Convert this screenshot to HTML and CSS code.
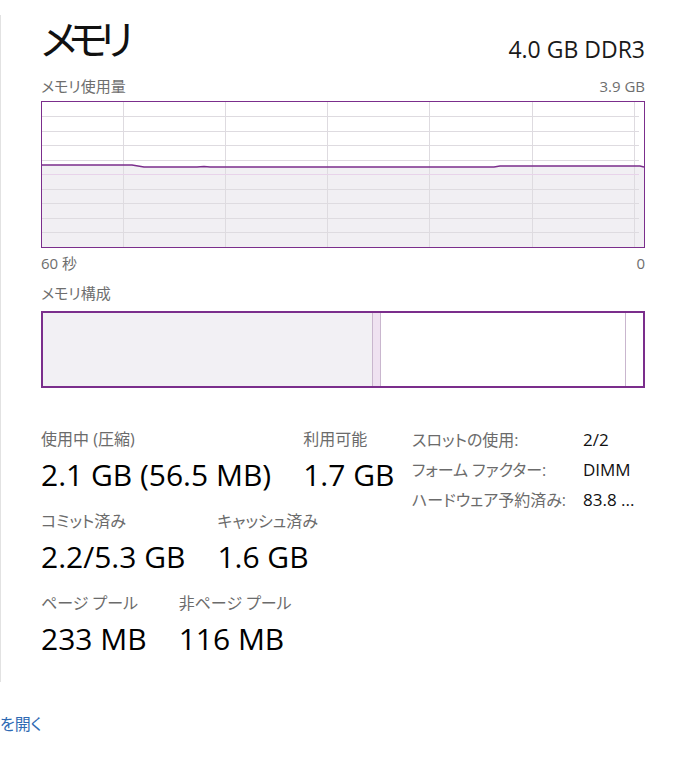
FILE: index.html
```html
<!DOCTYPE html>
<html lang="ja">
<head>
<meta charset="utf-8">
<title>メモリ</title>
<link rel="stylesheet" href="styles.css">
</head>
<body>
<div class="page">
  <div class="panel">
    <div class="header">
      <div class="title">メモリ</div>
      <div class="spec">4.0 GB DDR3</div>
    </div>
    <div class="caption-row top-caption">
      <span>メモリ使用量</span>
      <span>3.9 GB</span>
    </div>
    <div class="graph">
      <svg width="602" height="145" viewBox="0 0 602 145">
        <polygon points="0,63 90,63 102,65 155,65 162,64.5 168,65 452,65 458,64 598,64 602,65 602,145 0,145" fill="#f1eff3"/>
        <g stroke="#dedbe0" stroke-width="1">
          <line x1="0" y1="14.5" x2="597" y2="14.5"/>
          <line x1="0" y1="29.5" x2="597" y2="29.5"/>
          <line x1="0" y1="43.5" x2="597" y2="43.5"/>
          <line x1="0" y1="58.5" x2="597" y2="58.5"/>
          <line x1="0" y1="87.5" x2="597" y2="87.5"/>
          <line x1="0" y1="101.5" x2="597" y2="101.5"/>
          <line x1="0" y1="116.5" x2="597" y2="116.5"/>
          <line x1="0" y1="130.5" x2="597" y2="130.5"/>
          <line x1="81.5" y1="0" x2="81.5" y2="145"/>
          <line x1="183.5" y1="0" x2="183.5" y2="145"/>
          <line x1="285.5" y1="0" x2="285.5" y2="145"/>
          <line x1="387.5" y1="0" x2="387.5" y2="145"/>
          <line x1="490.5" y1="0" x2="490.5" y2="145"/>
          <line x1="592.5" y1="0" x2="592.5" y2="145"/>
        </g>
        <line x1="0" y1="72.5" x2="597" y2="72.5" stroke="#e8d3ea" stroke-width="1"/>
        <polyline points="0,63 90,63 102,65 155,65 162,64.5 168,65 452,65 458,64 598,64 602,65" fill="none" stroke="#7b2e8c" stroke-width="1.4"/>
      </svg>
    </div>
    <div class="caption-row time-caption">
      <span>60 秒</span>
      <span>0</span>
    </div>
    <div class="caption-row comp-caption">
      <span>メモリ構成</span>
    </div>
    <div class="composition">
      <div class="seg seg-inuse"></div>
      <div class="seg seg-modified"></div>
      <div class="seg seg-standby"></div>
      <div class="seg seg-free"></div>
    </div>
    <div class="stats">
      <div class="stats-main">
        <div class="stat-row">
          <div class="stat">
            <div class="stat-label">使用中 (圧縮)</div>
            <div class="stat-value">2.1 GB (56.5 MB)</div>
          </div>
          <div class="stat">
            <div class="stat-label">利用可能</div>
            <div class="stat-value">1.7 GB</div>
          </div>
        </div>
        <div class="stat-row">
          <div class="stat">
            <div class="stat-label">コミット済み</div>
            <div class="stat-value">2.2/5.3 GB</div>
          </div>
          <div class="stat">
            <div class="stat-label">キャッシュ済み</div>
            <div class="stat-value">1.6 GB</div>
          </div>
        </div>
        <div class="stat-row">
          <div class="stat">
            <div class="stat-label">ページ プール</div>
            <div class="stat-value">233 MB</div>
          </div>
          <div class="stat">
            <div class="stat-label">非ページ プール</div>
            <div class="stat-value">116 MB</div>
          </div>
        </div>
      </div>
      <div class="stats-side">
        <div class="side-label">スロットの使用:</div>
        <div class="side-value">2/2</div>
        <div class="side-label">フォーム ファクター:</div>
        <div class="side-value">DIMM</div>
        <div class="side-label">ハードウェア予約済み:</div>
        <div class="side-value">83.8 ...</div>
      </div>
    </div>
  </div>
  <div class="footer">
    <a class="link" href="#">を開く</a>
  </div>
</div>
</body>
</html>
```

FILE: styles.css
```css
html, body {
  margin: 0;
  padding: 0;
  background: #ffffff;
}

body {
  font-family: "Open Sans", "Noto Sans CJK JP", sans-serif;
  font-feature-settings: "palt" 1;
  color: #000000;
  width: 677px;
  height: 760px;
  overflow: hidden;
}

.page {
  display: flex;
  flex-direction: column;
}

.panel {
  margin-top: 15px;
  height: 667px;
  box-sizing: border-box;
  border-left: 1px solid #e2e2e2;
  padding: 0 32px 0 40px;
  display: flex;
  flex-direction: column;
}

.header {
  height: 62px;
  display: flex;
  justify-content: space-between;
  align-items: flex-end;
}

.title {
  font-size: 41px;
  line-height: 50px;
  letter-spacing: -8px;
  color: #111111;
  margin-bottom: 13px;
}

.spec {
  font-size: 23px;
  line-height: 30px;
  color: #1a1a1a;
  margin-bottom: 13px;
}

.caption-row {
  display: flex;
  justify-content: space-between;
  font-size: 15px;
  line-height: 18px;
  color: #6e6e6e;
}

.top-caption {
  height: 24px;
}

.graph {
  width: 602px;
  height: 145px;
  border: 1px solid #7b2e8c;
}

.graph svg {
  display: block;
}

.time-caption {
  height: 32px;
  box-sizing: border-box;
  padding-top: 6px;
}

.comp-caption {
  height: 31px;
  box-sizing: border-box;
  padding-top: 4px;
}

.composition {
  width: 600px;
  height: 73px;
  border: 2px solid #7b2e8c;
  display: flex;
}

.seg {
  height: 100%;
  box-sizing: border-box;
}

.seg-inuse {
  width: 329px;
  background: #f2f0f4;
}

.seg-modified {
  width: 9px;
  background: #efe2f1;
  border-left: 1px solid #c9b6ce;
  border-right: 1px solid #c9b6ce;
}

.seg-standby {
  flex: 1;
  border-right: 1px solid #c9b6ce;
}

.seg-free {
  width: 17px;
}

.stats {
  margin-top: 41px;
  display: flex;
}

.stats-main {
  width: 371px;
  display: flex;
  flex-direction: column;
}

.stat-row {
  display: flex;
  gap: 32px;
  height: 82px;
}

.stat-label {
  font-size: 16px;
  line-height: 20px;
  color: #6b6b6b;
}

.stat-value {
  margin-top: 8px;
  font-size: 30px;
  line-height: 36px;
  color: #000000;
}

.stats-side {
  display: grid;
  grid-template-columns: 171px auto;
  grid-auto-rows: 30px;
  align-content: start;
  margin-top: 1px;
}

.side-label {
  font-size: 16px;
  line-height: 20px;
  color: #6b6b6b;
}

.side-value {
  font-size: 17px;
  line-height: 20px;
  color: #111111;
}

.footer {
  margin-top: 31px;
  height: 22px;
}

.link {
  font-size: 16px;
  line-height: 20px;
  color: #2e6ab3;
  text-decoration: none;
}
```
